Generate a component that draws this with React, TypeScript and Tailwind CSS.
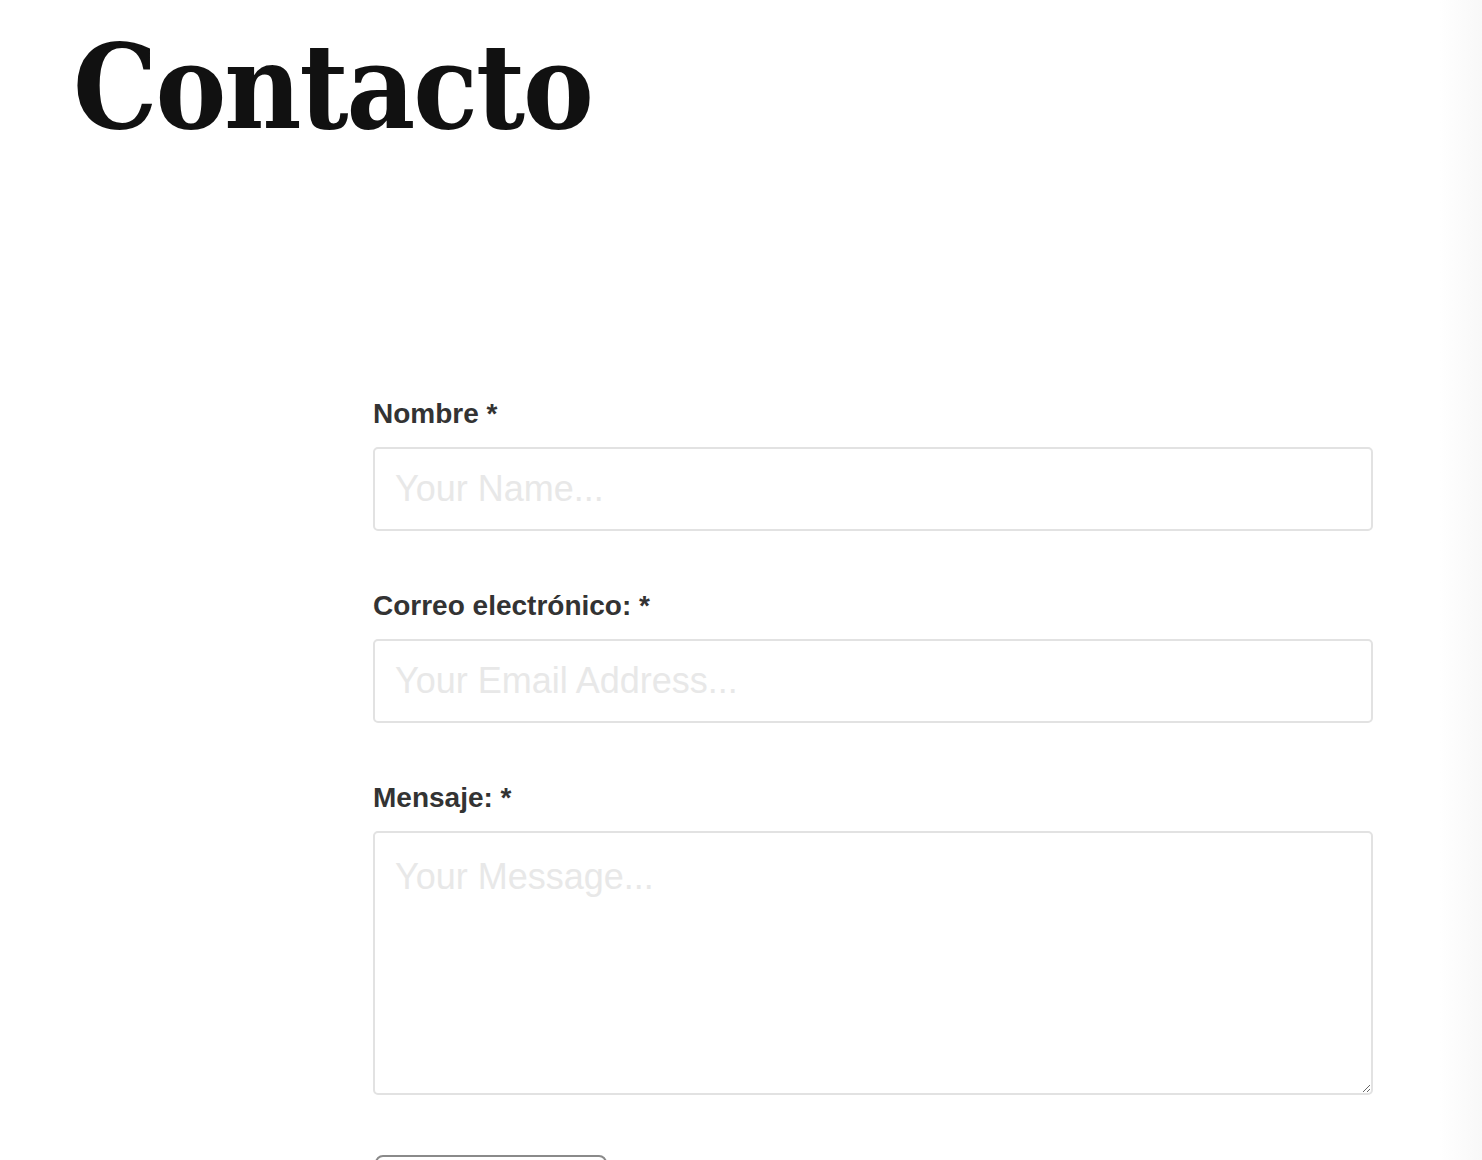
export default function App() {
  return (
    <div className="flex min-h-[1160px] bg-white">
      <div className="flex-1">
        <h1
          className="ml-[73px] mt-[22px] text-[118px] font-bold leading-[130px] tracking-[-2px] text-[#111]"
          style={{ fontFamily: '"DejaVu Serif Condensed", "DejaVu Serif", serif' }}
        >
          Contacto
        </h1>

        <form
          className="ml-[373px] mt-[245px] w-[1000px]"
          style={{ fontFamily: '"Liberation Sans", Arial, sans-serif' }}
        >
          <label className="block text-[28px] font-bold leading-[34px] text-[#333]">
            Nombre *
          </label>
          <input
            type="text"
            placeholder="Your Name..."
            className="mt-[16px] block h-[84px] w-full rounded-[5px] border-2 border-[#e2e2e2] px-[20px] text-[36px] placeholder:text-[#e8e8e8] outline-none"
          />

          <label className="mt-[58px] block text-[28px] font-bold leading-[34px] text-[#333]">
            Correo electrónico: *
          </label>
          <input
            type="email"
            placeholder="Your Email Address..."
            className="mt-[16px] block h-[84px] w-full rounded-[5px] border-2 border-[#e2e2e2] px-[20px] text-[36px] placeholder:text-[#e8e8e8] outline-none"
          />

          <label className="mt-[58px] block text-[28px] font-bold leading-[34px] text-[#333]">
            Mensaje: *
          </label>
          <textarea
            placeholder="Your Message..."
            className="mt-[16px] block h-[264px] w-full rounded-[5px] border-2 border-[#e2e2e2] px-[20px] py-[24px] text-[36px] leading-[1.1] placeholder:text-[#e8e8e8] outline-none"
          />

          <button
            type="submit"
            className="mt-[60px] ml-[2px] block h-[56px] w-[232px] rounded-[8px] border-2 border-[#8a8a8a] text-[22px] text-[#333]"
          >
            Enviar
          </button>
        </form>
      </div>
      <div className="w-[42px] bg-gradient-to-r from-white to-[#f8f8f8]" />
    </div>
  );
}
